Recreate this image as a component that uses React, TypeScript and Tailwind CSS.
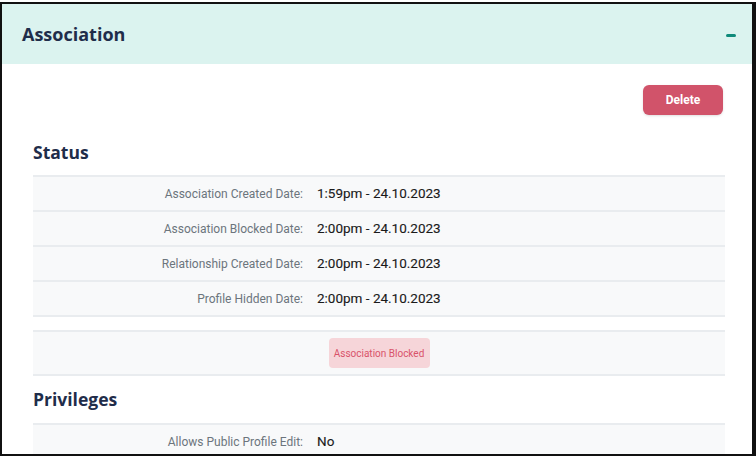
const statusRows = [
  { label: "Association Created Date:", value: "1:59pm - 24.10.2023" },
  { label: "Association Blocked Date:", value: "2:00pm - 24.10.2023" },
  { label: "Relationship Created Date:", value: "2:00pm - 24.10.2023" },
  { label: "Profile Hidden Date:", value: "2:00pm - 24.10.2023" },
];

const privilegeRows = [{ label: "Allows Public Profile Edit:", value: "No" }];

const headingFont = { fontFamily: '"Open Sans", "Noto Sans", sans-serif' };

function InfoRow({ label, value }: { label: string; value: string }) {
  return (
    <div className="flex h-[35px] items-center border-t-2 border-[#e9ecef] bg-[#f8f9fa]">
      <span className="w-[270px] shrink-0 text-right text-[12px] text-[#6c757d]">{label}</span>
      <span className="ml-[14px] text-[13.5px] font-normal text-[#1a1a1a] [-webkit-text-stroke:0.12px_#1a1a1a]">{value}</span>
    </div>
  );
}

function SectionTitle({ children }: { children: string }) {
  return (
    <h2 className="h-6 text-[17.5px] font-bold leading-6 text-[#1f2d4a]" style={headingFont}>
      {children}
    </h2>
  );
}

export default function App() {
  return (
    <div className="h-[457px] w-[756px] overflow-hidden bg-white pt-[2px]" style={{ fontFamily: "Roboto, sans-serif" }}>
      <div className="h-[454px] w-[756px] overflow-hidden border-2 border-r-4 border-[#111]">
        <div className="flex h-[60px] items-center justify-between bg-[#dbf3ef] pl-5 pr-4">
          <h1 className="text-[18px] font-bold text-[#1f2d4a]" style={headingFont}>
            Association
          </h1>
          <span className="mt-[2px] h-[3px] w-[10px] rounded-sm bg-[#0f8a7a]" />
        </div>
        <div className="pl-[31px] pr-[27px]">
          <div className="mt-[21px] flex justify-end pr-[2px]">
            <button className="h-[30px] w-[80px] rounded-md bg-[#d1536a] text-[12px] font-bold text-white shadow-sm">Delete</button>
          </div>
          <div className="mt-[25px]">
            <SectionTitle>Status</SectionTitle>
          </div>
          <div className="mt-[11px] border-b-2 border-[#e9ecef]">
            {statusRows.map((row) => (
              <InfoRow key={row.label} label={row.label} value={row.value} />
            ))}
          </div>
          <div className="mt-[13px] flex h-[46px] items-center justify-center border-y-2 border-[#e9ecef] bg-[#f8f9fa]">
            <span className="flex h-[30px] w-[101px] items-center justify-center rounded bg-[#f6d5d9] text-[10px] text-[#d9536a]">
              Association Blocked
            </span>
          </div>
          <div className="mt-[11px]">
            <SectionTitle>Privileges</SectionTitle>
          </div>
          <div className="mt-3">
            {privilegeRows.map((row) => (
              <InfoRow key={row.label} label={row.label} value={row.value} />
            ))}
          </div>
        </div>
      </div>
    </div>
  );
}
